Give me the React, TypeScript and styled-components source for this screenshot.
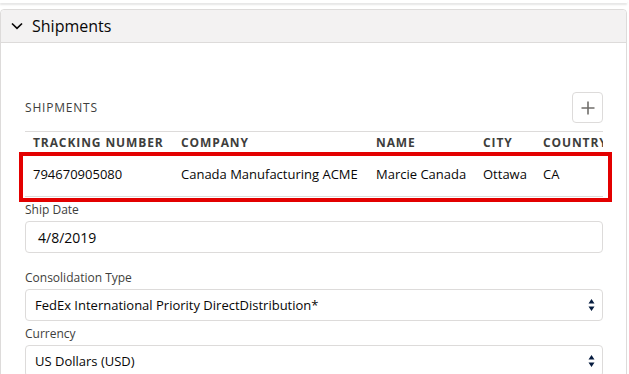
import React from "react";
import styled, { createGlobalStyle } from "styled-components";

const GlobalStyle = createGlobalStyle`
  html, body {
    margin: 0;
    padding: 0;
    background: #ffffff;
  }
  body {
    font-family: "Open Sans", "Liberation Sans", sans-serif;
    color: #080707;
    overflow: hidden;
  }
`;

const Page = styled.div`
  width: 629px;
  height: 374px;
  overflow: hidden;
  padding-right: 2px;
  box-sizing: border-box;
`;

const PrevCardEdge = styled.div`
  height: 3px;
  background: #ffffff;
  box-shadow: 0 2px 2px rgba(0, 0, 0, 0.1);
  margin-bottom: 6px;
`;

const Card = styled.section`
  border: 1px solid #dddbda;
  border-radius: 4px 4px 0 0;
  background: #ffffff;
  height: 400px;
`;

const CardHeader = styled.header`
  height: 32px;
  display: flex;
  align-items: center;
  padding-left: 10px;
  background: #f3f2f2;
  border-bottom: 1px solid #dddbda;
  border-radius: 4px 4px 0 0;
`;

const HeaderTitle = styled.h2`
  margin: 0 0 0 9px;
  font-size: 16px;
  font-weight: 400;
  line-height: 1;
  color: #080707;
`;

const CardBody = styled.div`
  padding: 49px 23px 0 24px;
`;

const TitleRow = styled.div`
  display: flex;
  align-items: center;
  justify-content: space-between;
  height: 31px;
  margin-bottom: 8px;
`;

const SectionTitle = styled.h3`
  margin: 0;
  font-size: 12px;
  font-weight: 400;
  letter-spacing: 0.8px;
  color: #3e3e3c;
`;

const IconButton = styled.button`
  width: 31px;
  height: 31px;
  padding: 0;
  display: flex;
  align-items: center;
  justify-content: center;
  background: #ffffff;
  border: 1px solid #dddbda;
  border-radius: 4px;
`;

const Table = styled.div`
  border-top: 1px solid #dddbda;
`;

const Row = styled.div<{ $head?: boolean }>`
  position: relative;
  display: grid;
  grid-template-columns: 148px 195px 107px 60px minmax(0, 1fr);
  align-items: center;
  height: ${(p) => (p.$head ? "20px" : "44px")};
  border-bottom: ${(p) => (p.$head ? "none" : "1px solid #dddbda")};
  white-space: nowrap;
`;

const HeadCell = styled.div`
  padding-left: 8px;
  overflow: hidden;
  font-size: 12px;
  font-weight: 700;
  letter-spacing: 0.9px;
  text-transform: uppercase;
  color: #3e3e3c;
`;

const Cell = styled.div`
  padding-left: 8px;
  overflow: hidden;
  font-size: 13px;
  color: #080707;
`;

const Highlight = styled.div`
  position: absolute;
  left: -6px;
  right: -9px;
  top: 0;
  bottom: -6px;
  border: 4px solid #e30000;
  pointer-events: none;
`;

const Field = styled.div<{ $gap: number }>`
  margin-top: ${(p) => p.$gap}px;
`;

const Label = styled.label`
  display: block;
  font-size: 12px;
  line-height: 18px;
  color: #3e3e3c;
  margin-bottom: 2px;
`;

const Input = styled.div<{ $pad?: number; $size?: number }>`
  position: relative;
  height: 32px;
  box-sizing: border-box;
  border: 1px solid #dddbda;
  border-radius: 4px;
  display: flex;
  align-items: center;
  padding-left: ${(p) => p.$pad ?? 12}px;
  font-size: ${(p) => p.$size ?? 13}px;
  color: #080707;
`;

const SelectArrows = styled.svg`
  position: absolute;
  right: 7px;
  top: 50%;
  transform: translateY(-50%);
`;

const Chevron = () => (
  <svg width="12" height="8" viewBox="0 0 12 8">
    <path d="M1 1.5 L6 6.3 L11 1.5" fill="none" stroke="#080707" strokeWidth="1.7" />
  </svg>
);

const Plus = () => (
  <svg width="14" height="14" viewBox="0 0 14 14">
    <path d="M7 0.5 V13.5 M0.5 7 H13.5" stroke="#706e6b" strokeWidth="1.6" />
  </svg>
);

const Arrows = () => (
  <SelectArrows width="7" height="14" viewBox="0 0 7 14">
    <path d="M3.5 1 L6.5 5.5 H0.5 Z M0.5 8.5 H6.5 L3.5 13 Z" fill="#061c3f" />
  </SelectArrows>
);

const columns = ["Tracking Number", "Company", "Name", "City", "Country"];
const shipment = ["794670905080", "Canada Manufacturing ACME", "Marcie Canada", "Ottawa", "CA"];

export default function App() {
  return (
    <Page>
      <GlobalStyle />
      <PrevCardEdge />
      <Card>
        <CardHeader>
          <Chevron />
          <HeaderTitle>Shipments</HeaderTitle>
        </CardHeader>
        <CardBody>
          <TitleRow>
            <SectionTitle>SHIPMENTS</SectionTitle>
            <IconButton aria-label="Add shipment">
              <Plus />
            </IconButton>
          </TitleRow>
          <Table>
            <Row $head>
              {columns.map((c) => (
                <HeadCell key={c}>{c}</HeadCell>
              ))}
            </Row>
            <Row>
              {shipment.map((v) => (
                <Cell key={v}>{v}</Cell>
              ))}
              <Highlight />
            </Row>
          </Table>
          <Field $gap={4}>
            <Label>Ship Date</Label>
            <Input $size={14}>4/8/2019</Input>
          </Field>
          <Field $gap={16}>
            <Label>Consolidation Type</Label>
            <Input $pad={9}>
              FedEx International Priority DirectDistribution*
              <Arrows />
            </Input>
          </Field>
          <Field $gap={4}>
            <Label>Currency</Label>
            <Input $pad={9}>
              US Dollars (USD)
              <Arrows />
            </Input>
          </Field>
        </CardBody>
      </Card>
    </Page>
  );
}
